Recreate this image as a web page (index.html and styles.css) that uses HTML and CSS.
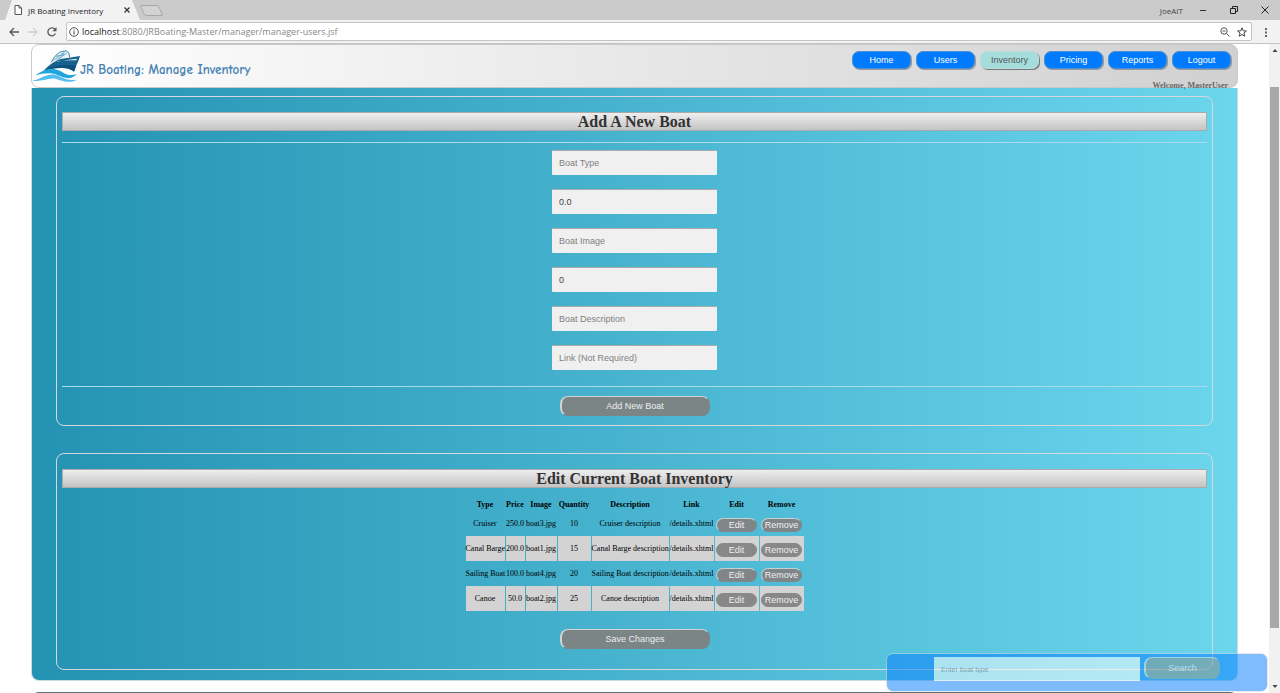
FILE: index.html
```
<!DOCTYPE html>
<html lang="en">

<head>
    <meta charset="UTF-8">
    <meta name="viewport" content="width=device-width, initial-scale=1.0">
    <title>JR Boating Inventory</title>
    <link rel="stylesheet" href="styles.css">
</head>

<body>

    <!-- browser window -->
    <div class="tabstrip">
        <div class="tab">
            <svg class="tab-icon" viewBox="0 0 8 10"><path d="M1 .5h4l2.5 2.5v6.500H1z M5 .5V3h2.500" fill="#fff" stroke="#555"/></svg>
            <span class="tab-title">JR Boating Inventory</span>
            <button class="plain tab-close" aria-label="Close tab">
                <svg width="6" height="6" viewBox="0 0 6 6"><path d="M.5.5l5 5M5.500.5l-5 5" stroke="#333" stroke-width="1.200"/></svg>
            </button>
        </div>
        <button class="plain new-tab" aria-label="New tab"></button>
        <div class="window-btns">
            <span class="profile">JoeAIT</span>
            <button class="plain" aria-label="Minimize"><svg width="8" height="8" viewBox="0 0 8 8"><path d="M1 4.500h6" stroke="#333"/></svg></button>
            <button class="plain" aria-label="Restore"><svg width="8" height="8" viewBox="0 0 8 8"><path d="M.5 2.500h5v5h-5zM2.500 2.500v-2h5v5h-2" fill="none" stroke="#222"/></svg></button>
            <button class="plain" aria-label="Close"><svg width="8" height="8" viewBox="0 0 8 8"><path d="M.5.5l7 7M7.500.5l-7 7" stroke="#222"/></svg></button>
        </div>
    </div>
    <div class="toolbar">
        <button class="plain" aria-label="Back"><svg width="10" height="10" viewBox="0 0 10 10"><path d="M10 5H1M5 1L1 5l4 4" fill="none" stroke="#555" stroke-width="1.300"/></svg></button>
        <button class="plain" aria-label="Forward"><svg width="10" height="10" viewBox="0 0 10 10"><path d="M0 5h9M5 1l4 4-4 4" fill="none" stroke="#d0d0d0" stroke-width="1.300"/></svg></button>
        <button class="plain" aria-label="Reload"><svg width="10" height="10" viewBox="0 0 10 10"><path d="M8.500 6.500A4 4 0 1 1 8 2.300" fill="none" stroke="#555" stroke-width="1.300"/><path d="M9.500 0v4.200H5.300z" fill="#555"/></svg></button>
        <div class="address">
            <svg width="10" height="10" viewBox="0 0 10 10"><circle cx="5" cy="5" r="4.300" fill="none" stroke="#555"/><path d="M5 4.300v3.200M5 2.400v1.200" stroke="#555" stroke-width="1.200"/></svg>
            <span class="url"><b>localhost</b>:8080/JRBoating-Master/manager/manager-users.jsf</span>
            <svg width="10" height="10" viewBox="0 0 10 10"><circle cx="4" cy="4" r="3.200" fill="none" stroke="#555"/><path d="M2.500 4h3M6.500 6.500L9.500 9.500" stroke="#555"/></svg>
            <svg width="10" height="10" viewBox="0 0 10 10"><path d="M5 .8l1.200 3 3.200.2-2.500 2 .9 3.200L5 7.500 2.200 9.200l.9-3.200-2.500-2 3.200-.2z" fill="none" stroke="#444"/></svg>
        </div>
        <button class="plain" aria-label="Menu"><svg width="10" height="10" viewBox="0 0 10 10"><path d="M4 1h2v2H4zM4 4.500h2v2H4zM4 8h2v2H4z" fill="#666"/></svg></button>
    </div>

    <div class="viewport">
        <div class="page">
            <header class="header">
                <svg class="logo" viewBox="0 0 144 96">
                    <path d="M58 37L68 20 82 7l20-5 8 6 3 13" fill="#e9f4f9" stroke="#3c87ad" stroke-width="3"/>
                    <path d="M65 31l28-22M74 30l30-21M83 27l15-22M70 19l28-5" stroke="#6ba9c6" stroke-width="3"/>
                    <path d="M34 63C50 46 66 32 91 26l53-8c-5 18-12 29-18 47-24-16-51-12-92-2z" fill="#17618f"/>
                    <path d="M74 36c22-6 43-8 61-10l-2 5c-20-1-38 0-55 3z" fill="#e6f3f9"/>
                    <path d="M45 59c28-16 56-15 87-12l-5 17c-23-16-49-12-82-5z" fill="#0c4f7f"/>
                    <path d="M10 76c22-16 49-25 73-14 17 8 25 18 51 10-18 21-39 11-56 4-22-10-43-6-68 0z" fill="#22a4df"/>
                    <path d="M0 92c24-2 44-24 71-17 20 5 30 19 64 14-24 13-46 3-62-2-23-6-42 10-73 5z" fill="#53bdf0"/>
                </svg>
                <h1 class="title">JR Boating: Manage Inventory</h1>
                <div class="header-right">
                    <nav class="nav">
                        <button>Home</button>
                        <button>Users</button>
                        <button class="on">Inventory</button>
                        <button>Pricing</button>
                        <button>Reports</button>
                        <button>Logout</button>
                    </nav>
                    <p class="welcome">Welcome, MasterUser</p>
                </div>
            </header>

            <main class="content">
                <form class="panel">
                    <h2>Add A New Boat</h2>
                    <div class="fields">
                        <input type="text" aria-label="Boat Type" placeholder="Boat Type" autofocus>
                        <input type="text" aria-label="Boat Price" value="0.0">
                        <input type="text" aria-label="Boat Image" placeholder="Boat Image">
                        <input type="text" aria-label="Boat Quantity" value="0">
                        <input type="text" aria-label="Boat Description" placeholder="Boat Description">
                        <input type="text" aria-label="Link" placeholder="Link (Not Required)">
                    </div>
                    <button type="button" class="btn">Add New Boat</button>
                </form>

                <form class="panel">
                    <h2>Edit Current Boat Inventory</h2>
                    <table class="boats">
                        <thead>
                            <tr>
                                <th class="w-type">Type</th>
                                <th class="w-price">Price</th>
                                <th class="w-image">Image</th>
                                <th class="w-qty">Quantity</th>
                                <th class="w-desc">Description</th>
                                <th class="w-link">Link</th>
                                <th class="w-btn">Edit</th>
                                <th class="w-btn">Remove</th>
                            </tr>
                        </thead>
                        <tbody>
                            <tr>
                                <td>Cruiser</td>
                                <td>250.0</td>
                                <td>boat3.jpg</td>
                                <td>10</td>
                                <td>Cruiser description</td>
                                <td>/details.xhtml</td>
                                <td><button type="button">Edit</button></td>
                                <td><button type="button">Remove</button></td>
                            </tr>
                            <tr>
                                <td>Canal Barge</td>
                                <td>200.0</td>
                                <td>boat1.jpg</td>
                                <td>15</td>
                                <td>Canal Barge description</td>
                                <td>/details.xhtml</td>
                                <td><button type="button">Edit</button></td>
                                <td><button type="button">Remove</button></td>
                            </tr>
                            <tr>
                                <td>Sailing Boat</td>
                                <td>100.0</td>
                                <td>boat4.jpg</td>
                                <td>20</td>
                                <td>Sailing Boat description</td>
                                <td>/details.xhtml</td>
                                <td><button type="button">Edit</button></td>
                                <td><button type="button">Remove</button></td>
                            </tr>
                            <tr>
                                <td>Canoe</td>
                                <td>50.0</td>
                                <td>boat2.jpg</td>
                                <td>25</td>
                                <td>Canoe description</td>
                                <td>/details.xhtml</td>
                                <td><button type="button">Edit</button></td>
                                <td><button type="button">Remove</button></td>
                            </tr>
                        </tbody>
                    </table>
                    <button type="button" class="btn">Save Changes</button>
                </form>
            </main>
            <footer class="footer"></footer>
        </div>

        <div class="scrollbar">
            <svg width="10" height="10" viewBox="0 0 10 10"><path d="M2.500 7L5 4l2.500 3z" fill="#444"/></svg>
            <div class="track"><div class="thumb"></div></div>
            <svg width="10" height="10" viewBox="0 0 10 10"><path d="M2.500 3h5L5 6z" fill="#444"/></svg>
        </div>
    </div>

    <form class="search">
        <input type="text" aria-label="Enter boat type" placeholder="Enter boat type">
        <button type="button" class="btn">Search</button>
    </form>

</body>

</html>
```
FILE: styles.css
```
* {
    margin: 0;
    padding: 0;
    box-sizing: border-box;
}

body {
    display: flex;
    flex-direction: column;
    height: 100vh;
    overflow: hidden;
    background: #fff;
    font-family: "Liberation Serif", "Times New Roman", serif;
}

button,
input {
    font-family: "Liberation Sans", Arial, sans-serif;
    font-size: 9px;
}

svg {
    display: block;
    flex: none;
}

/* browser window */
.plain {
    border: 0;
    background: none;
}

.tabstrip {
    display: flex;
    align-items: center;
    flex: none;
    height: 20px;
    padding-left: 5px;
    background: #cbcbcb;
    font: 8px "Open Sans", sans-serif;
}

.tab {
    display: flex;
    align-items: center;
    width: 135px;
    height: 20px;
    padding: 0 10px 0 9px;
    background: #f2f2f2;
    clip-path: polygon(7px 0, 127px 0, 100% 100%, 0 100%);
}

.tab-icon {
    width: 8px;
    height: 10px;
}

.tab-title {
    flex: 1;
    margin-left: 6px;
    color: #222;
    white-space: nowrap;
}

.new-tab {
    width: 19px;
    height: 11px;
    margin-left: 2px;
    border: 1px solid #a8a8a8;
    border-radius: 2px;
    background: #d3d3d3;
    transform: skewX(24deg);
}

.window-btns {
    display: flex;
    align-items: center;
    gap: 23px;
    margin-left: auto;
    padding-right: 11px;
}

.profile {
    margin-right: -7px;
    color: #444;
    font-size: 8px;
}

.toolbar {
    display: flex;
    align-items: center;
    flex: none;
    gap: 9px;
    height: 24px;
    padding: 0 9px;
    border-bottom: 1px solid #c4c4c4;
    background: #f2f2f2;
}

.address {
    display: flex;
    align-items: center;
    flex: 1;
    gap: 7px;
    height: 19px;
    padding: 0 4px 0 2px;
    border: 1px solid #c4c4c4;
    border-radius: 2px;
    background: #fff;
    font: 9px "Open Sans", sans-serif;
}

.url {
    flex: 1;
    margin-left: -4px;
    color: #888;
}

.url b {
    color: #222;
    font-weight: normal;
}

/* page */
.viewport {
    display: flex;
    flex: 1;
    min-height: 0;
}

.page {
    flex: 1;
    padding: 0 31px;
    overflow: hidden;
}

.header {
    display: flex;
    align-items: center;
    height: 44px;
    padding: 0 6px 0 0;
    border: 1px solid #c9c9c9;
    border-radius: 8px;
    background: linear-gradient(to right, #fff, #d0d0d0);
}

.logo {
    width: 48px;
    height: 32px;
}

.title {
    padding-top: 6px;
    color: #4682b4;
    font: bold 13px "Comic Sans MS", "Comic Neue", "Liberation Sans", sans-serif;
}

.header-right {
    align-self: flex-start;
    margin-left: auto;
    padding-top: 6px;
}

.nav {
    display: flex;
    gap: 5px;
}

.nav button {
    width: 59px;
    height: 18px;
    border: 1px solid #4d90d6;
    border-radius: 7px;
    background: #007bff;
    box-shadow: 1px 1px 0 #999;
    color: #fff;
}

.nav .on {
    border-color: #b8dede;
    background: #a5dcdc;
    box-shadow: 1px 1px 0 #777;
    color: #555;
}

.welcome {
    padding: 12px 3px 0 0;
    color: #666;
    font-size: 8px;
    font-weight: bold;
    line-height: 10px;
    text-align: right;
}

.content {
    display: flex;
    flex-direction: column;
    gap: 27px;
    padding: 8px 24px 10px;
    border: 1px solid #c8dde2;
    border-top: 0;
    border-radius: 0 0 8px 8px;
    background: linear-gradient(to right, #2492b2, #6cd6ee);
}

.panel {
    display: flex;
    flex-direction: column;
    align-items: center;
    padding: 15px 5px 9px;
    border: 1px solid #d3d9dc;
    border-radius: 8px;
}

.panel + .panel {
    padding-bottom: 20px;
}

.panel h2 {
    width: 100%;
    height: 19px;
    border: 1px solid #aaa;
    background: linear-gradient(#eee, #c4c4c4);
    color: #333;
    font-size: 16px;
    line-height: 17px;
    text-align: center;
}

.fields {
    display: flex;
    flex-direction: column;
    align-items: center;
    gap: 14px;
    width: 100%;
    margin: 11px 0 9px;
    padding: 7px 0 16px;
    border: 1px solid #a9dbe8;
    border-width: 1px 0;
}

.fields input {
    width: 165px;
    height: 25px;
    padding: 0 7px;
    border: 0;
    border-top: 1px solid #aaa;
    border-radius: 1px;
    outline: 0;
    background: #f0f0f0;
    color: #444;
}

::placeholder {
    color: #808080;
}

.btn {
    width: 150px;
    height: 20px;
    border: 1px solid #7b8586;
    border-top-color: #d3d3d3;
    border-left: 2px solid #d3d3d3;
    border-radius: 8px;
    background: #7b8586;
    color: #eee;
}

.boats {
    margin: 9px 0 18px;
    border-spacing: 1px 0;
    table-layout: fixed;
    width: 340px;
    font-size: 8px;
    text-align: center;
    white-space: nowrap;
}

.boats th {
    height: 14px;
}

.boats td {
    height: 25px;
}

.boats tr:nth-child(even) td {
    background: #d3d3d3;
}

.boats button {
    display: block;
    width: 41px;
    height: 14px;
    margin: 2px auto 0;
    border: 1px solid #808688;
    border-top-color: #c4d0d4;
    border-left-color: #c4d0d4;
    border-radius: 7px;
    background: #808688;
    color: #eee;
    line-height: 12px;
}

.boats tr:nth-child(even) button {
    border-color: #888;
    background: #888;
}

.w-type {
    width: 39px;
}

.w-price {
    width: 19px;
}

.w-image {
    width: 31px;
}

.w-qty {
    width: 33px;
}

.w-desc {
    width: 77px;
}

.w-link {
    width: 44px;
}

.w-btn {
    width: 44px;
}

.footer {
    height: 60px;
    margin-top: 11px;
    border-radius: 8px;
    background: #5f7272;
}

/* search stays over the page */
.search {
    position: fixed;
    right: 12px;
    bottom: 1px;
    display: flex;
    gap: 4px;
    width: 382px;
    height: 39px;
    padding: 3px 47px;
    border: 1px solid #d3d3d3;
    border-radius: 7px;
    background: #007bff;
    opacity: .5;
}

.search input {
    flex: 1;
    height: 24px;
    padding: 0 7px;
    border: 0;
    background: #fff;
    font-size: 7px;
}

.search .btn {
    width: 76px;
    height: 22px;
}

/* scrollbar */
.scrollbar {
    display: flex;
    flex-direction: column;
    align-items: center;
    width: 11px;
    padding: 1px 0;
    background: #f1f1f1;
}

.track {
    display: flex;
    flex: 1;
    width: 100%;
    padding: 32px 1px 0;
}

.thumb {
    width: 100%;
    height: 91%;
    background: #a8a8a8;
}
```
